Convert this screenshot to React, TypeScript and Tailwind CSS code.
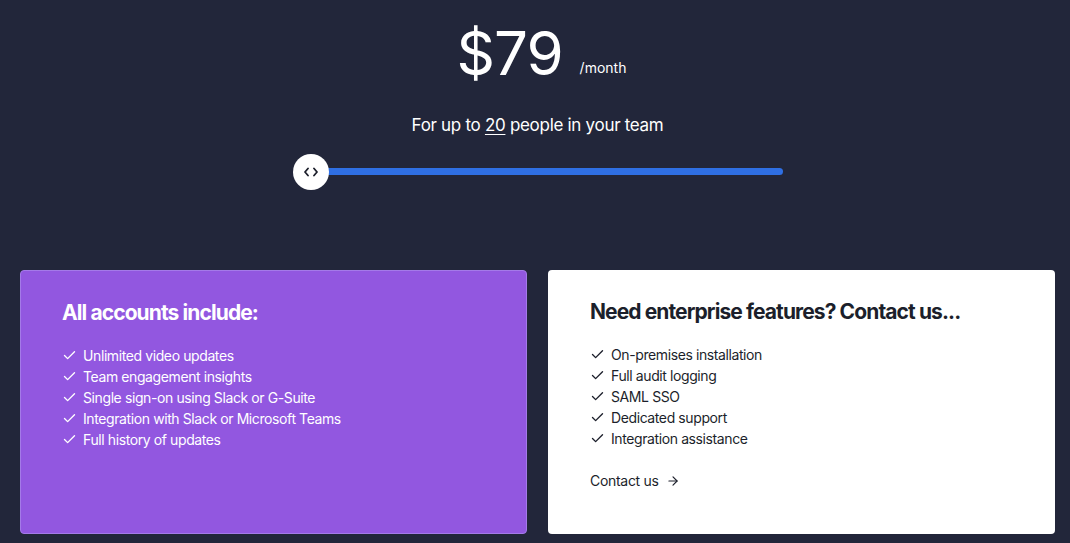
import { Check, ArrowRight } from "lucide-react";

const included = [
  "Unlimited video updates",
  "Team engagement insights",
  "Single sign-on using Slack or G-Suite",
  "Integration with Slack or Microsoft Teams",
  "Full history of updates",
];

const enterprise = [
  "On-premises installation",
  "Full audit logging",
  "SAML SSO",
  "Dedicated support",
  "Integration assistance",
];

function FeatureList({ items, dark }: { items: string[]; dark?: boolean }) {
  return (
    <ul className="flex flex-col mt-[17px]">
      {items.map((item) => (
        <li key={item} className="flex items-center h-[21px] text-[14px] tracking-[-0.4px]">
          <Check
            className={`w-[15px] h-[15px] mr-[6px] ${dark ? "text-[#1c1f2b]" : "text-white"}`}
            strokeWidth={2.2}
          />
          <span>{item}</span>
        </li>
      ))}
    </ul>
  );
}

export default function App() {
  return (
    <div
      className="w-full h-[543px] bg-[#22263a] text-white overflow-hidden"
      style={{ fontFamily: "Inter, 'Noto Sans', sans-serif" }}
    >
      <div className="pl-[20px] pr-[15px]">
        <div className="flex flex-col items-center">
          <div className="flex items-end mt-[20px] h-[63px]">
            <span className="text-[60px] leading-none tracking-[-1px] font-normal ml-[8px]">$79</span>
            <span className="text-[14px] ml-[17px] mb-[5px]">/month</span>
          </div>
          <p className="mt-[30px] text-[17px] tracking-[-0.3px]">
            For up to <span className="underline underline-offset-[3px]">20</span> people in your team
          </p>
          <div className="relative w-[490px] h-[36px] mt-[15px] flex items-center">
            <div className="ml-[18px] flex-1 h-[7px] rounded-full bg-[#2f6fe3]" />
            <div className="absolute left-0 top-0 w-[36px] h-[36px] rounded-full bg-white flex items-center justify-center text-[#1c1f2b]">
              <svg width="14" height="10" viewBox="0 0 14 10" fill="none" stroke="currentColor" strokeWidth="1.8" strokeLinecap="round" strokeLinejoin="round">
                <path d="M4 1.5 L1 5 L4 8.5" />
                <path d="M10 1.5 L13 5 L10 8.5" />
              </svg>
            </div>
          </div>
        </div>

        <div className="grid grid-cols-2 gap-[21px] mt-[80px]">
          <div className="h-[264px] rounded-[4px] bg-[#9257e0] border border-[#a47ae8] px-[41px] pt-[26px]">
            <h3 className="text-[21px] font-bold tracking-[-0.9px]">All accounts include:</h3>
            <FeatureList items={included} />
          </div>
          <div className="h-[264px] rounded-[4px] bg-white text-[#1c1f2b] px-[42px] pt-[26px]">
            <h3 className="text-[21px] font-bold tracking-[-0.9px]">Need enterprise features? Contact us...</h3>
            <FeatureList items={enterprise} dark />
            <a className="mt-[21px] flex items-center text-[14px] tracking-[-0.3px]">
              Contact us
              <ArrowRight className="w-[14px] h-[14px] ml-[7px]" strokeWidth={2} />
            </a>
          </div>
        </div>
      </div>
    </div>
  );
}
